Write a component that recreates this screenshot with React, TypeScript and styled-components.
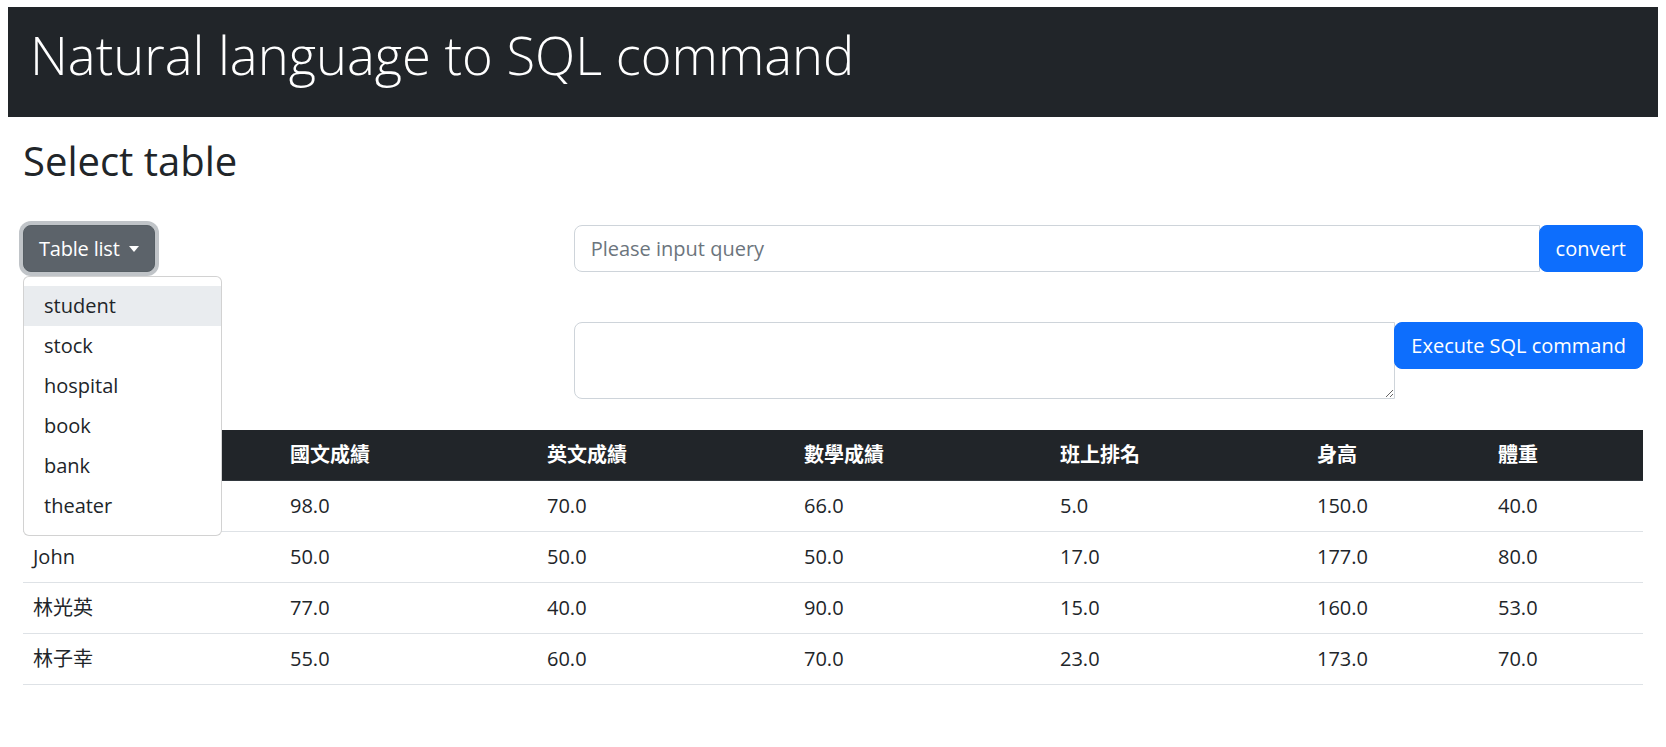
import React, { useState } from 'react';
import styled, { createGlobalStyle } from 'styled-components';

const FONT = `"Open Sans", "Noto Sans CJK TC", sans-serif`;

const GlobalStyle = createGlobalStyle`
  html, body {
    background: #ffffff;
  }
  body {
    margin: 7px 8px 8px;
    font-family: ${FONT};
    color: #212529;
  }
  * {
    box-sizing: border-box;
  }
`;

const TABLES = ['student', 'stock', 'hospital', 'book', 'bank', 'theater'];

const COLUMNS = [
  { name: '姓名', width: 257 },
  { name: '國文成績', width: 257 },
  { name: '英文成績', width: 257 },
  { name: '數學成績', width: 256 },
  { name: '班上排名', width: 257 },
  { name: '身高', width: 181 },
  { name: '體重', width: 155 },
];

const ROWS = [
  ['王小明', '98.0', '70.0', '66.0', '5.0', '150.0', '40.0'],
  ['John', '50.0', '50.0', '50.0', '17.0', '177.0', '80.0'],
  ['林光英', '77.0', '40.0', '90.0', '15.0', '160.0', '53.0'],
  ['林子幸', '55.0', '60.0', '70.0', '23.0', '173.0', '70.0'],
];

const App = () => {
  const [query, setQuery] = useState('');
  const [sql, setSql] = useState('');
  const [open, setOpen] = useState(true);
  const [active, setActive] = useState('student');

  return (
    <>
      <GlobalStyle />
      <Banner>
        <Title>Natural language to SQL command</Title>
      </Banner>
      <Main>
        <Heading>Select table</Heading>
        <Controls>
          <DropdownWrap>
            <ToggleButton type="button" onClick={() => setOpen(!open)}>
              Table list
              <Caret />
            </ToggleButton>
            {open
              && <Menu>
                {TABLES.map(name => (
                  <MenuItem
                    key={name}
                    active={name === active}
                    onClick={() => setActive(name)}
                  >
                    {name}
                  </MenuItem>
                ))}
              </Menu>
            }
          </DropdownWrap>
          <InputGroup>
            <QueryInput
              type="text"
              placeholder="Please input query"
              value={query}
              onChange={e => setQuery(e.target.value)}
            />
            <PrimaryButton type="button">convert</PrimaryButton>
          </InputGroup>
          <div />
          <InputGroup>
            <SqlArea rows={2} value={sql} onChange={e => setSql(e.target.value)} />
            <PrimaryButton type="button">Execute SQL command</PrimaryButton>
          </InputGroup>
        </Controls>
        <DataTable>
          <colgroup>
            {COLUMNS.map(col => <col key={col.name} style={{ width: col.width }} />)}
          </colgroup>
          <thead>
            <tr>
              {COLUMNS.map(col => <HeadCell key={col.name}>{col.name}</HeadCell>)}
            </tr>
          </thead>
          <tbody>
            {ROWS.map(row => (
              <tr key={row[0]}>
                {row.map((cell, i) => <Cell key={i}>{cell}</Cell>)}
              </tr>
            ))}
          </tbody>
        </DataTable>
      </Main>
    </>
  );
};

const Banner = styled.header`
  height: 110px;
  padding: 16px 22px 0;
  background: #212529;
`;

const Title = styled.h1`
  margin: 0;
  font-family: ${FONT};
  font-size: 52.5px;
  font-weight: 300;
  line-height: 1.2;
  color: #ffffff;
  white-space: nowrap;
`;

const Main = styled.main`
  padding: 0 15px;
`;

const Heading = styled.h2`
  margin: 20px 0 40px;
  font-size: 40px;
  font-weight: 400;
  line-height: 48px;
  color: #212529;
`;

const Controls = styled.div`
  display: grid;
  grid-template-columns: 1fr 2fr;
  column-gap: 16px;
  row-gap: 50px;
  align-items: start;
`;

const DropdownWrap = styled.div`
  position: relative;
  z-index: 2;
`;

const ToggleButton = styled.button`
  display: inline-flex;
  align-items: center;
  gap: 9px;
  height: 47px;
  padding: 0 15px;
  border: 1px solid #565e64;
  border-radius: 8px;
  background: #5c636a;
  color: #ffffff;
  font-family: ${FONT};
  font-size: 20px;
  line-height: 30px;
  letter-spacing: -0.2px;
  box-shadow: 0 0 0 4px rgba(130, 138, 145, 0.5);
  cursor: pointer;
`;

const Caret = styled.span`
  width: 0;
  height: 0;
  border-top: 6px solid #ffffff;
  border-left: 5.5px solid transparent;
  border-right: 5.5px solid transparent;
`;

const Menu = styled.ul`
  position: absolute;
  top: 51px;
  left: 0;
  width: 199px;
  margin: 0;
  padding: 9px 0;
  list-style: none;
  background: #ffffff;
  border: 1px solid rgba(0, 0, 0, 0.175);
  border-radius: 6px;
`;

const MenuItem = styled.li<{ active?: boolean }>`
  padding: 5px 20px;
  font-size: 20px;
  line-height: 30px;
  color: #212529;
  background: ${props => props.active ? '#e9ecef' : 'transparent'};
  cursor: pointer;
`;

const InputGroup = styled.div`
  display: flex;
  align-items: flex-start;
`;

const fieldStyles = `
  flex: 1;
  min-width: 0;
  padding: 8px 16px;
  border: 1px solid #ced4da;
  border-radius: 8px 0 0 8px;
  font-family: ${FONT};
  font-size: 20px;
  line-height: 29px;
  color: #212529;
  background: #ffffff;
  outline: none;
  &::placeholder {
    color: #6c757d;
  }
`;

const QueryInput = styled.input`
  ${fieldStyles}
  height: 47px;
`;

const SqlArea = styled.textarea`
  ${fieldStyles}
  height: 77px;
  resize: vertical;
`;

const PrimaryButton = styled.button`
  flex: none;
  height: 47px;
  margin-left: -1px;
  padding: 0 16px;
  border: 1px solid #0d6efd;
  border-radius: 8px;
  background: #0d6efd;
  color: #ffffff;
  font-family: ${FONT};
  font-size: 20px;
  line-height: 30px;
  cursor: pointer;
`;

const DataTable = styled.table`
  width: 100%;
  margin-top: 31px;
  border-collapse: collapse;
  table-layout: fixed;
  font-size: 20px;
  line-height: 30px;
`;

const HeadCell = styled.th`
  padding: 10px;
  text-align: left;
  font-weight: 700;
  color: #ffffff;
  background: #212529;
  border-bottom: 1px solid #32383e;
`;

const Cell = styled.td`
  padding: 10px;
  color: #212529;
  border-bottom: 1px solid #dee2e6;
`;

export default App;
